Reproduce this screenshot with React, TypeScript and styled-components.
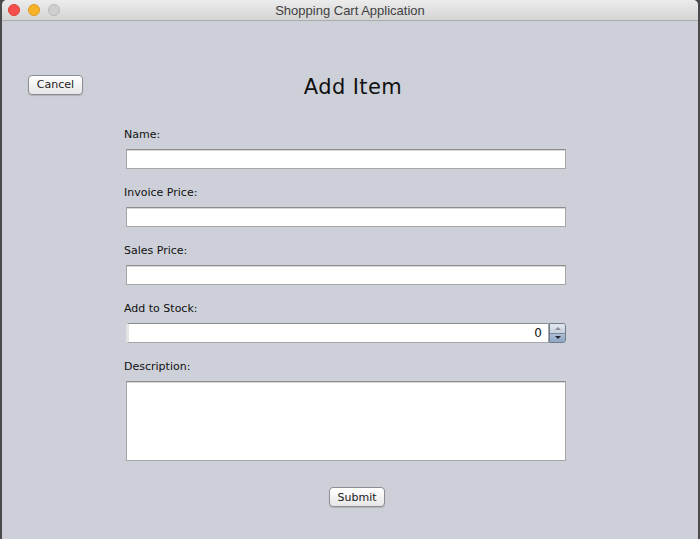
import React from 'react'
import styled, { createGlobalStyle } from 'styled-components'

const Global = createGlobalStyle`
  html, body {
    margin: 0;
    padding: 0;
    background: #4a4a4c;
  }
  * { box-sizing: border-box; }
`

const Window = styled.div`
  width: 696px;
  height: 539px;
  margin: 0 2px;
  background: #ced0d9;
  border-radius: 5px 5px 0 0;
  overflow: hidden;
  display: flex;
  flex-direction: column;
  font-family: 'DejaVu Sans', 'Liberation Sans', sans-serif;
`

const TitleBar = styled.div`
  height: 21px;
  flex: none;
  display: flex;
  align-items: center;
  position: relative;
  background: linear-gradient(#ececec, #d4d4d4);
  border-bottom: 1px solid #acacac;
`

const Lights = styled.div`
  display: flex;
  gap: 8px;
  padding-left: 6px;
`

const Light = styled.span<{ $c: string; $b: string }>`
  width: 12px;
  height: 12px;
  border-radius: 50%;
  background: ${(p) => p.$c};
  border: 1px solid ${(p) => p.$b};
`

const Title = styled.div`
  position: absolute;
  left: 0;
  right: 0;
  text-align: center;
  font-family: 'Liberation Sans', sans-serif;
  font-size: 13px;
  color: #3f3f3f;
`

const Body = styled.div`
  flex: 1;
  display: flex;
  flex-direction: column;
`

const Header = styled.div`
  display: grid;
  grid-template-columns: 1fr auto 1fr;
  align-items: center;
  margin-top: 52px;
  height: 26px;
`

const Heading = styled.h1`
  margin: 0 0 0 6px;
  font-weight: normal;
  font-size: 21px;
  color: #111;
  letter-spacing: 0.4px;
  transform: translateY(1px);
`

const Button = styled.button<{ $w: number }>`
  width: ${(p) => p.$w}px;
  height: 20px;
  padding: 0;
  border: 1px solid #8e8e92;
  border-radius: 4px;
  background: linear-gradient(#ffffff, #f3f3f3 50%, #e6e6e6);
  box-shadow: 0 1px 1px rgba(0, 0, 0, 0.15);
  font-family: 'DejaVu Sans', sans-serif;
  font-size: 11px;
  color: #1a1a1a;
`

const CancelCell = styled.div`
  padding-left: 26px;
  margin-top: -4px;
`

const Form = styled.div`
  margin-left: 122px;
  width: 442px;
  display: flex;
  flex-direction: column;
  margin-top: 29px;
`

const Group = styled.div`
  display: flex;
  flex-direction: column;
  margin-bottom: 17px;
`

const Label = styled.label`
  font-size: 11px;
  line-height: 14px;
  color: #111;
  margin-bottom: 7px;
`

const Field = styled.div<{ $h?: number }>`
  margin-left: 2px;
  width: 440px;
  height: ${(p) => p.$h ?? 20}px;
  background: #fff;
  border: 1px solid #a6a6a6;
  border-top-color: #8c8c8c;
  box-shadow: inset 0 1px 0 #d8d8d8;
`

const SpinRow = styled.div`
  margin-left: 2px;
  width: 440px;
  height: 20px;
  display: flex;
`

const SpinField = styled.div`
  flex: 1;
  background: #fff;
  border: 1px solid #a6a6a6;
  border-top-color: #8c8c8c;
  border-left: 3px solid #e4e4e4;
  display: flex;
  align-items: center;
  justify-content: flex-end;
  padding-right: 6px;
  font-size: 12px;
  color: #111;
`

const Spinner = styled.div`
  width: 17px;
  display: flex;
  flex-direction: column;
  border: 1px solid #6f7c8e;
  border-radius: 0 3px 3px 0;
  overflow: hidden;
`

const SpinHalf = styled.div<{ $dark?: boolean }>`
  flex: 1;
  display: flex;
  align-items: center;
  justify-content: center;
  background: ${(p) => (p.$dark ? 'linear-gradient(#aebfd6, #8ea6c4)' : 'linear-gradient(#e3e8ef, #c6d0dd)')};
  & + & { border-top: 1px solid #7c8797; }
`

const Tri = styled.span<{ $up?: boolean }>`
  width: 0;
  height: 0;
  border-left: 3px solid transparent;
  border-right: 3px solid transparent;
  ${(p) => (p.$up ? 'border-bottom: 3px solid #8a8f99;' : 'border-top: 3px solid #1f2530;')}
`

const Footer = styled.div`
  display: flex;
  justify-content: center;
  margin-top: 9px;
  padding-left: 24px;
`

export default function App() {
  return (
    <>
      <Global />
      <Window>
        <TitleBar>
          <Lights>
            <Light $c="#f5504a" $b="#de3d36" />
            <Light $c="#f8b22a" $b="#de9a1e" />
            <Light $c="#cfcfcf" $b="#b9b9b9" />
          </Lights>
          <Title>Shopping Cart Application</Title>
        </TitleBar>
        <Body>
          <Header>
            <CancelCell>
              <Button $w={55}>Cancel</Button>
            </CancelCell>
            <Heading>Add Item</Heading>
            <div />
          </Header>
          <Form>
            <Group>
              <Label>Name:</Label>
              <Field />
            </Group>
            <Group>
              <Label>Invoice Price:</Label>
              <Field />
            </Group>
            <Group>
              <Label>Sales Price:</Label>
              <Field />
            </Group>
            <Group>
              <Label>Add to Stock:</Label>
              <SpinRow>
                <SpinField>0</SpinField>
                <Spinner>
                  <SpinHalf>
                    <Tri $up />
                  </SpinHalf>
                  <SpinHalf $dark>
                    <Tri />
                  </SpinHalf>
                </Spinner>
              </SpinRow>
            </Group>
            <Group>
              <Label>Description:</Label>
              <Field $h={80} />
            </Group>
            <Footer>
              <Button $w={56}>Submit</Button>
            </Footer>
          </Form>
        </Body>
      </Window>
    </>
  )
}
